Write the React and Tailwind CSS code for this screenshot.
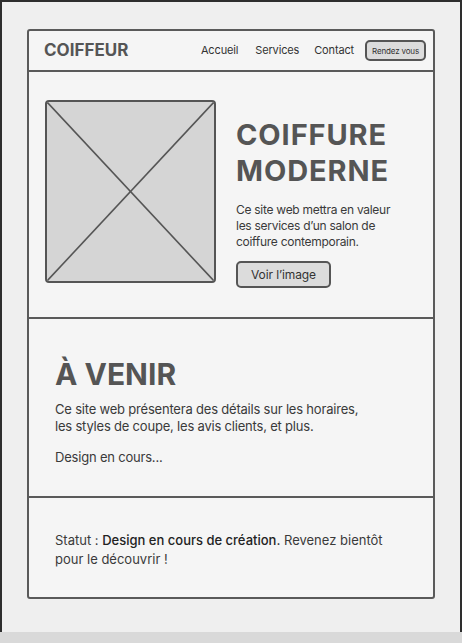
import React from 'react';

function Placeholder() {
  return (
    <div className="relative w-[171px] h-[183px] shrink-0 rounded-[4px] border-2 border-[#555] bg-[#d5d5d5] overflow-hidden">
      <svg className="absolute inset-0 w-full h-full" viewBox="0 0 100 100" preserveAspectRatio="none">
        <line x1="0" y1="0" x2="100" y2="100" stroke="#555" strokeWidth="1.6" vectorEffect="non-scaling-stroke" />
        <line x1="100" y1="0" x2="0" y2="100" stroke="#555" strokeWidth="1.6" vectorEffect="non-scaling-stroke" />
      </svg>
    </div>
  );
}

export default function App() {
  return (
    <div className="w-[462px] h-[643px] flex flex-col bg-[#efefef] font-['Inter',sans-serif] text-[#4a4a4a]">
      <div className="flex-1 border-t-2 border-x-2 border-[#2e2e2e] pt-[27px] pl-[25px]">
        <div className="w-[408px] rounded-[3px] border-2 border-[#5a5a5a] bg-[#f5f5f5]">
          {/* Header */}
          <header className="h-[41px] flex items-center justify-between pl-[15px] pr-[7px] border-b-2 border-[#5a5a5a]">
            <span className="text-[17px] font-bold text-[#555]">COIFFEUR</span>
            <nav className="flex items-center text-[11px] tracking-[-0.15px] text-[#333]">
              <span className="mr-[17px]">Accueil</span>
              <span className="mr-[15px]">Services</span>
              <span className="mr-[11px]">Contact</span>
              <span className="h-[21px] px-[5px] flex items-center rounded-[5px] border-2 border-[#555] bg-[#dcdcdc] text-[8px] text-[#333]">
                Rendez vous
              </span>
            </nav>
          </header>

          {/* Hero */}
          <section className="h-[247px] flex pl-[16px] pt-[28px] gap-[20px] border-b-2 border-[#5a5a5a]">
            <Placeholder />
            <div className="pt-[17px]">
              <h1 className="text-[29px] leading-[36px] font-bold text-[#555] tracking-[0.9px]">
                COIFFURE<br />MODERNE
              </h1>
              <p className="mt-[13px] text-[12px] leading-[16px] tracking-[-0.28px] text-[#3a3a3a]">
                Ce site web mettra en valeur<br />les services d’un salon de<br />coiffure contemporain.
              </p>
              <button className="mt-[11px] h-[27px] px-[13px] rounded-[5px] border-2 border-[#555] bg-[#dcdcdc] text-[12px] tracking-[-0.1px] text-[#333]">
                Voir l’image
              </button>
            </div>
          </section>

          {/* À venir */}
          <section className="h-[179px] pl-[26px] pt-[36px] border-b-2 border-[#5a5a5a]">
            <h2 className="text-[30px] leading-[38px] font-bold text-[#555]">À VENIR</h2>
            <p className="mt-[8px] text-[13px] leading-[17px] tracking-[-0.2px] text-[#3a3a3a]">
              Ce site web présentera des détails sur les horaires,<br />les styles de coupe, les avis clients, et plus.
            </p>
            <p className="mt-[14px] text-[13px] leading-[17px] tracking-[-0.2px] text-[#3a3a3a]">Design en cours...</p>
          </section>

          {/* Statut */}
          <section className="h-[99px] pl-[26px] pt-[33px]">
            <p className="text-[13px] leading-[19px] text-[#3a3a3a]">
              Statut : <span className="font-medium text-[#222]">Design en cours de création.</span> Revenez bientôt<br />pour le découvrir !
            </p>
          </section>
        </div>
      </div>
      <div className="h-[11px] bg-[#d9d9d9]" />
    </div>
  );
}
